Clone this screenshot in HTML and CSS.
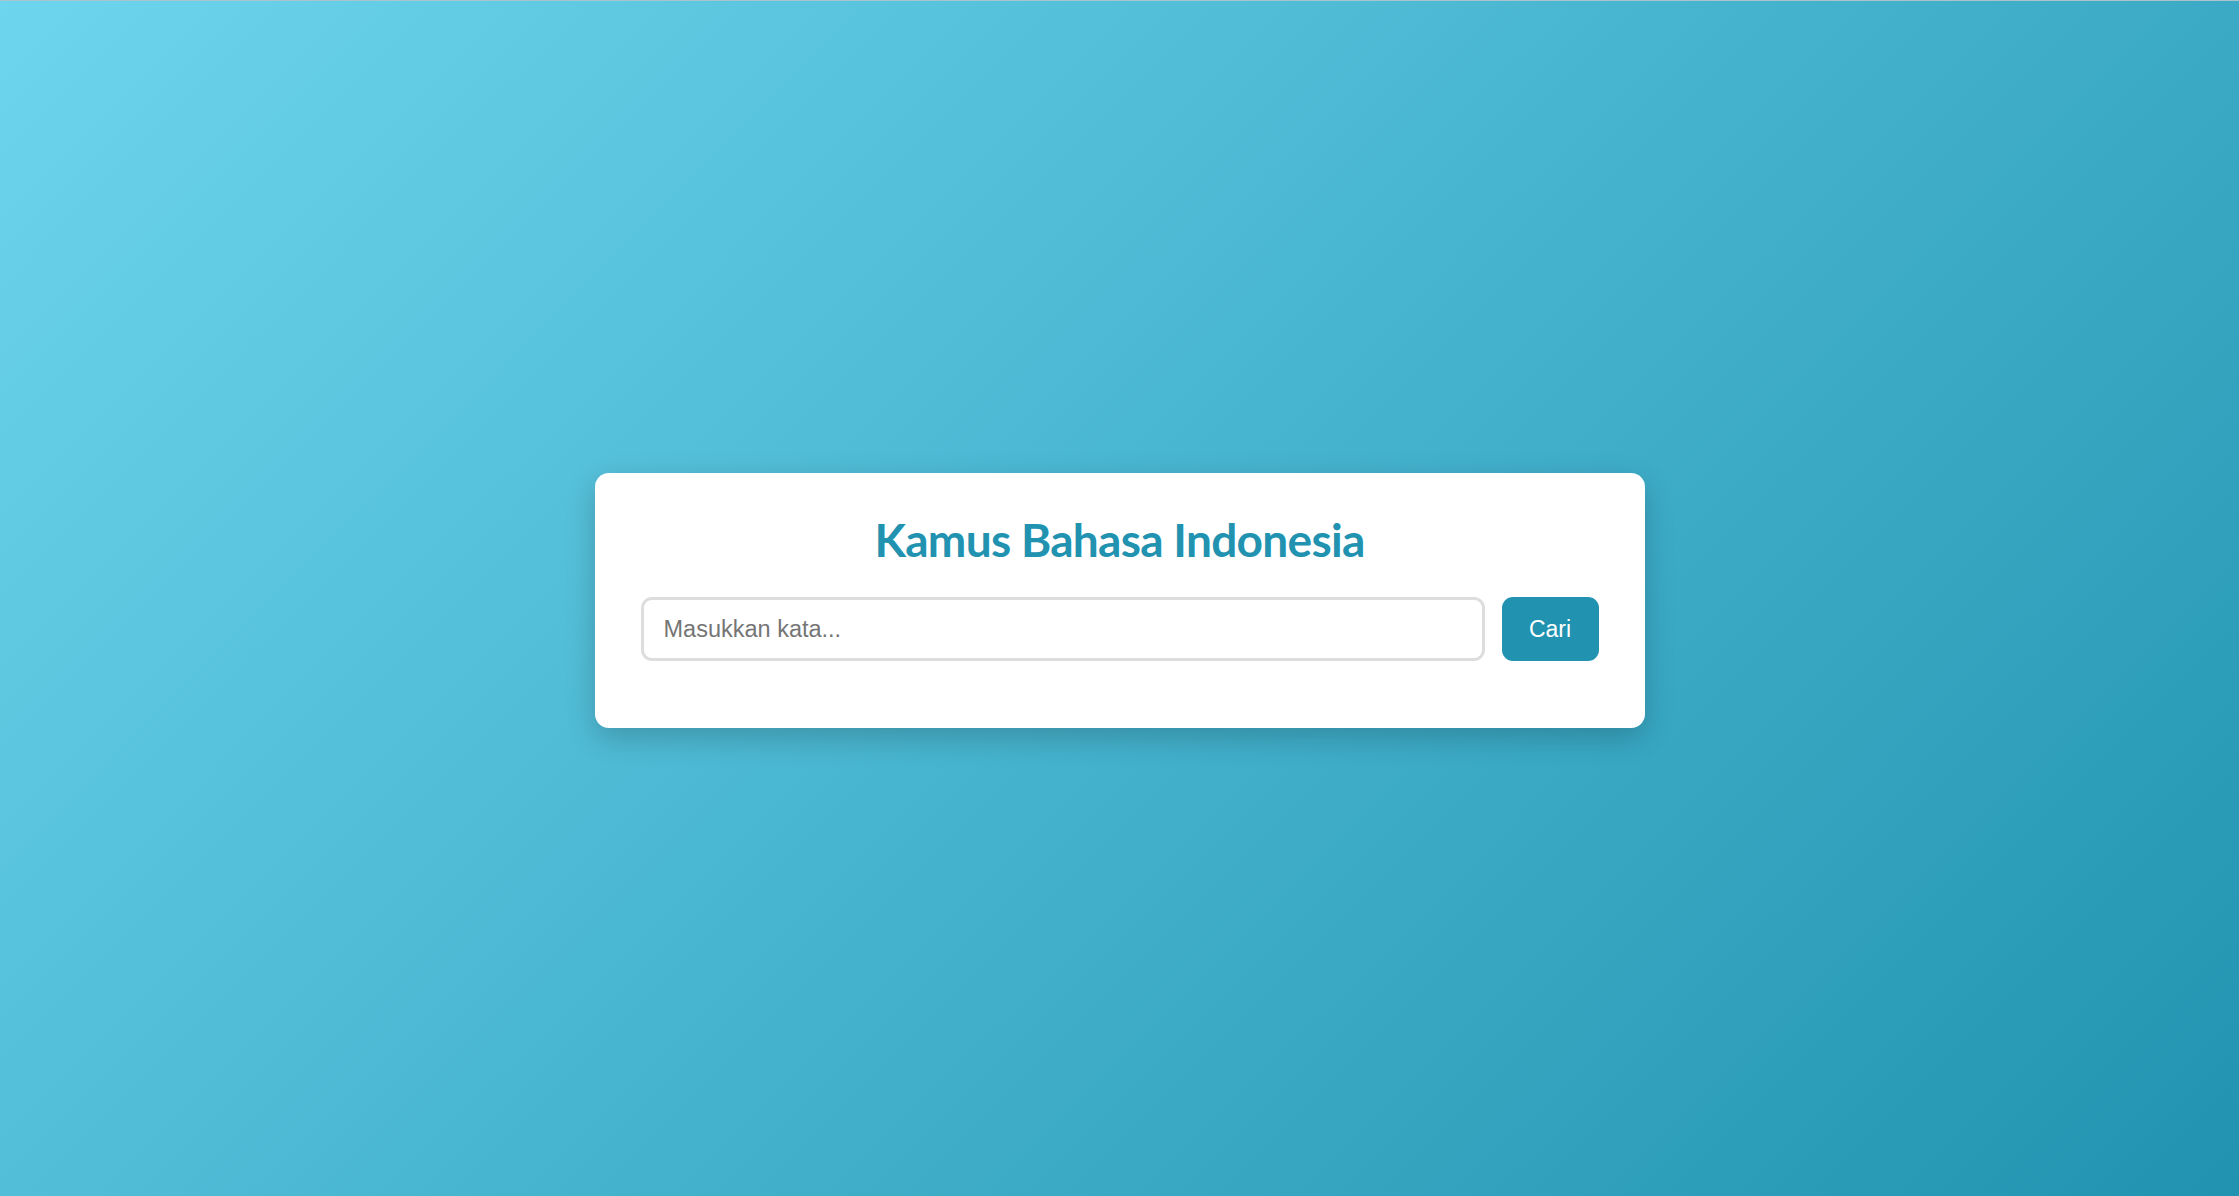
FILE: index.html
```html
<!DOCTYPE html>
<html lang="id">
<head>
<meta charset="utf-8">
<title>Kamus Bahasa Indonesia</title>
<link rel="stylesheet" href="styles.css">
</head>
<body>
<div class="page">
  <div class="card">
    <h1 class="title">Kamus Bahasa Indonesia</h1>
    <div class="search">
      <input class="search-input" type="text" placeholder="Masukkan kata...">
      <button class="search-btn" type="button">Cari</button>
    </div>
  </div>
</div>
</body>
</html>
```
FILE: styles.css
```css
html, body {
  margin: 0;
  padding: 0;
  height: 100%;
}
body {
  background: linear-gradient(135deg, #6dd5ed 0%, #2193b0 100%);
  border-top: 1px solid #a9c4cc;
  box-sizing: border-box;
  font-family: "Liberation Sans", Arial, sans-serif;
}
.page {
  height: 100%;
  display: flex;
  align-items: center;
  justify-content: center;
  padding-top: 4px;
  box-sizing: border-box;
}
.card {
  width: 1050px;
  box-sizing: border-box;
  background: #ffffff;
  border-radius: 14px;
  padding: 36px 46px 67px;
  box-shadow: 0 10px 30px rgba(0, 0, 0, 0.2);
  display: flex;
  flex-direction: column;
}
.title {
  margin: 0 0 27px;
  font-family: Lato, "Open Sans", sans-serif;
  font-weight: 700;
  font-size: 46px;
  line-height: 61px;
  letter-spacing: -0.7px;
  color: #2193b0;
  text-align: center;
}
.search {
  display: flex;
  gap: 17px;
}
.search-input {
  flex: 1;
  height: 64px;
  box-sizing: border-box;
  border: 3px solid #dddddd;
  border-radius: 11px;
  padding: 0 20px;
  font-family: "Liberation Sans", Arial, sans-serif;
  font-size: 23.5px;
  color: #333;
  outline: none;
}
.search-input::placeholder {
  color: #757575;
}
.search-btn {
  width: 97px;
  height: 64px;
  border: none;
  border-radius: 11px;
  background: #2193b0;
  color: #ffffff;
  font-family: "Liberation Sans", Arial, sans-serif;
  font-size: 23px;
  cursor: pointer;
}
```
